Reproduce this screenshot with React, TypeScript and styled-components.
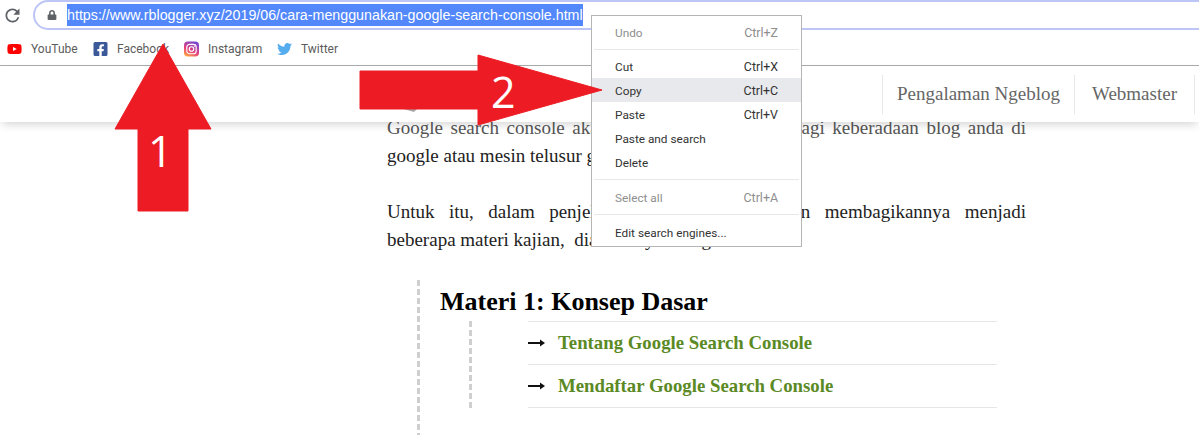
import styled, {createGlobalStyle} from "styled-components";
import {FaFacebookSquare, FaLock, FaTwitter, FaYoutube} from "react-icons/fa";
import {MdRefresh} from "react-icons/md";

const GlobalStyle = createGlobalStyle`
  html, body {
    margin: 0;
    padding: 0;
    background: #fff;
    overflow: hidden;
  }
`;

const Page = styled.div`
  position: relative;
  width: 1199px;
  height: 435px;
  overflow: hidden;
  background: #fff;
  font-family: "Liberation Serif", serif;
`;

const Toolbar = styled.div`
  display: flex;
  align-items: flex-start;
  height: 32px;
  padding-left: 2px;
  box-sizing: border-box;
`;

const ReloadSlot = styled.div`
  width: 31px;
  height: 30px;
  display: flex;
  align-items: center;
  color: #5f6368;
  font-size: 21px;
`;

const Omnibox = styled.div`
  flex: 1;
  height: 30px;
  margin-right: -30px;
  box-sizing: border-box;
  border: 2px solid #bcc5f5;
  border-radius: 15px;
  display: flex;
  align-items: center;
  padding-left: 12px;
`;

const LockSlot = styled.div`
  width: 20px;
  color: #5f6368;
  font-size: 10px;
  display: flex;
`;

const UrlText = styled.span`
  font-family: "Liberation Sans", sans-serif;
  font-size: 14.25px;
  line-height: 22px;
  color: #fff;
  background: #5288fb;
`;

const BookmarkBar = styled.div`
  display: flex;
  align-items: center;
  height: 33px;
  padding-left: 7px;
  border-bottom: 1px solid #acacac;
  font-family: Roboto, sans-serif;
  font-size: 12px;
  color: #5c5c5c;
`;

const Bookmark = styled.div<{$width: number}>`
  width: ${(p) => p.$width}px;
  display: flex;
  align-items: center;
  gap: 9px;
`;

const IconSlot = styled.span<{$color: string}>`
  display: flex;
  width: 15px;
  justify-content: center;
  color: ${(p) => p.$color};
  font-size: 16px;
`;

const SiteNav = styled.nav`
  position: relative;
  z-index: 2;
  display: flex;
  justify-content: flex-end;
  align-items: center;
  height: 56px;
  padding-right: 4px;
  background: #fff;
  box-shadow: 0 4px 9px -2px rgba(0, 0, 0, 0.18);
`;

const NavItem = styled.a<{$width: number}>`
  width: ${(p) => p.$width}px;
  height: 39px;
  display: flex;
  align-items: center;
  justify-content: center;
  border-left: 1px solid #e8e8e8;
  font-size: 19px;
  color: #666;
  &:last-child {
    border-right: 1px solid #e8e8e8;
  }
`;

const Article = styled.article`
  width: 639px;
  margin-left: 387px;
  margin-top: -8px;
  font-size: 19px;
  line-height: 28px;
  color: #222;
`;

const Para = styled.p`
  margin: 0 0 28px;
`;

const FullLine = styled.span<{$faded?: boolean}>`
  display: block;
  text-align: justify;
  text-align-last: justify;
  color: ${(p) => (p.$faded ? "#555" : "inherit")};
`;

const LastLine = styled.span`
  display: block;
`;

const Materi = styled.section`
  margin: -2px 0 0 30px;
  padding: 4px 0 40px 20px;
  border-left: 3px dashed #cfcfcf;
`;

const MateriTitle = styled.h2`
  margin: 0 0 2px;
  font-size: 26px;
  line-height: 35px;
  color: #000;
`;

const LessonGroup = styled.div`
  margin-left: 29px;
  padding-left: 56px;
  border-left: 3px dashed #cfcfcf;
  width: 469px;
`;

const LessonRow = styled.div`
  display: flex;
  align-items: center;
  height: 42px;
  border-top: 1px solid #e6e6e6;
  &:last-child {
    border-bottom: 1px solid #e6e6e6;
  }
`;

const LessonArrow = styled.svg`
  width: 17px;
  height: 10px;
  margin-right: 13px;
`;

const LessonLink = styled.a`
  color: #5b8a25;
  font-size: 18.8px;
  font-weight: bold;
`;

const ContextMenu = styled.div`
  position: absolute;
  z-index: 5;
  left: 591px;
  top: 15px;
  width: 209px;
  padding: 4px 0 2px;
  background: #fff;
  border: 1px solid #b5b5b5;
  font-family: Roboto, sans-serif;
  font-size: 11.8px;
`;

const MenuRow = styled.div<{$dim?: boolean; $active?: boolean}>`
  height: 24px;
  box-sizing: border-box;
  padding: 1px 23px 0 23px;
  display: flex;
  align-items: center;
  justify-content: space-between;
  color: ${(p) => (p.$dim ? "#8e8e8e" : "#333")};
  background: ${(p) => (p.$active ? "#e8e9ec" : "transparent")};
`;

const Shortcut = styled.span`
  font-size: 12.4px;
`;

const MenuSep = styled.div<{$height: number}>`
  height: ${(p) => p.$height}px;
  display: flex;
  align-items: center;
  &::after {
    content: "";
    flex: 1;
    margin: 0 2px;
    border-top: 1px solid #e8e8e8;
  }
`;

const ArrowOverlay = styled.svg`
  position: absolute;
  z-index: 6;
  left: 0;
  top: 0;
  pointer-events: none;
`;

const ArrowNumber = styled.text`
  font-family: "Open Sans", sans-serif;
  font-size: 43px;
  fill: #fff;
`;

const InstagramIcon = () => (
    <svg width="16" height="16" viewBox="0 0 16 16">
        <defs>
            <linearGradient id="ig" x1="0.1" y1="1" x2="0.6" y2="0">
                <stop offset="0" stopColor="#fdb13a"/>
                <stop offset="0.45" stopColor="#e8407c"/>
                <stop offset="1" stopColor="#7a45d0"/>
            </linearGradient>
        </defs>
        <rect width="16" height="16" rx="4" fill="url(#ig)"/>
        <rect x="3" y="3" width="10" height="10" rx="3" fill="none" stroke="#fff" strokeWidth="1.2"/>
        <circle cx="8" cy="8" r="2.4" fill="none" stroke="#fff" strokeWidth="1.2"/>
        <circle cx="11" cy="5" r="0.7" fill="#fff"/>
    </svg>
);

const ArrowGlyph = () => (
    <LessonArrow viewBox="0 0 17 10">
        <path d="M0 5 H14" stroke="#111" strokeWidth="2"/>
        <path d="M12 1.5 L17 5 L12 8.5 Z" fill="#111"/>
    </LessonArrow>
);

const App = () => {
    return (
        <Page>
            <GlobalStyle/>
            <Toolbar>
                <ReloadSlot><MdRefresh/></ReloadSlot>
                <Omnibox>
                    <LockSlot><FaLock/></LockSlot>
                    <UrlText>https://www.rblogger.xyz/2019/06/cara-menggunakan-google-search-console.html</UrlText>
                </Omnibox>
            </Toolbar>
            <BookmarkBar>
                <Bookmark $width={86}><IconSlot $color="#f00"><FaYoutube/></IconSlot>YouTube</Bookmark>
                <Bookmark $width={91}><IconSlot $color="#3b5998"><FaFacebookSquare/></IconSlot>Facebook</Bookmark>
                <Bookmark $width={93}><IconSlot $color="#e1306c"><InstagramIcon/></IconSlot>Instagram</Bookmark>
                <Bookmark $width={80}><IconSlot $color="#55acee"><FaTwitter/></IconSlot>Twitter</Bookmark>
            </BookmarkBar>
            <SiteNav>
                <NavItem $width={191}>Pengalaman Ngeblog</NavItem>
                <NavItem $width={119}>Webmaster</NavItem>
            </SiteNav>
            <Article>
                <Para>
                    <FullLine $faded>Google search console akan sangat berguna sekali bagi keberadaan blog anda di</FullLine>
                    <LastLine>google atau mesin telusur google.</LastLine>
                </Para>
                <Para>
                    <FullLine>Untuk itu, dalam penjelasan kali ini, saya akan membagikannya menjadi</FullLine>
                    <LastLine>beberapa materi kajian,&nbsp; diantaranya sebagai berikut:</LastLine>
                </Para>
                <Materi>
                    <MateriTitle>Materi 1: Konsep Dasar</MateriTitle>
                    <LessonGroup>
                        <LessonRow><ArrowGlyph/><LessonLink>Tentang Google Search Console</LessonLink></LessonRow>
                        <LessonRow><ArrowGlyph/><LessonLink>Mendaftar Google Search Console</LessonLink></LessonRow>
                    </LessonGroup>
                </Materi>
            </Article>
            <ContextMenu>
                <MenuRow $dim><span>Undo</span><Shortcut>Ctrl+Z</Shortcut></MenuRow>
                <MenuSep $height={10}/>
                <MenuRow><span>Cut</span><Shortcut>Ctrl+X</Shortcut></MenuRow>
                <MenuRow $active><span>Copy</span><Shortcut>Ctrl+C</Shortcut></MenuRow>
                <MenuRow><span>Paste</span><Shortcut>Ctrl+V</Shortcut></MenuRow>
                <MenuRow><span>Paste and search</span></MenuRow>
                <MenuRow><span>Delete</span></MenuRow>
                <MenuSep $height={11}/>
                <MenuRow $dim><span>Select all</span><Shortcut>Ctrl+A</Shortcut></MenuRow>
                <MenuSep $height={11}/>
                <MenuRow><span>Edit search engines...</span></MenuRow>
            </ContextMenu>
            <ArrowOverlay width="1199" height="435">
                <path d="M400 108 H418 L414 112 Z" fill="#a8a8a8"/>
                <path d="M163 44 L211 129 H188 V211 H138 V129 H115 Z" fill="#ed1c24" stroke="#ed1c24" strokeWidth="1" strokeLinejoin="round"/>
                <ArrowNumber x="148" y="167">1</ArrowNumber>
                <path d="M360 71 H478 V55 L602 90 L478 125 V109 H360 Z" fill="#ed1c24" stroke="#ed1c24" strokeWidth="1" strokeLinejoin="round"/>
                <ArrowNumber x="491" y="108">2</ArrowNumber>
            </ArrowOverlay>
        </Page>
    );
};

export default App;
